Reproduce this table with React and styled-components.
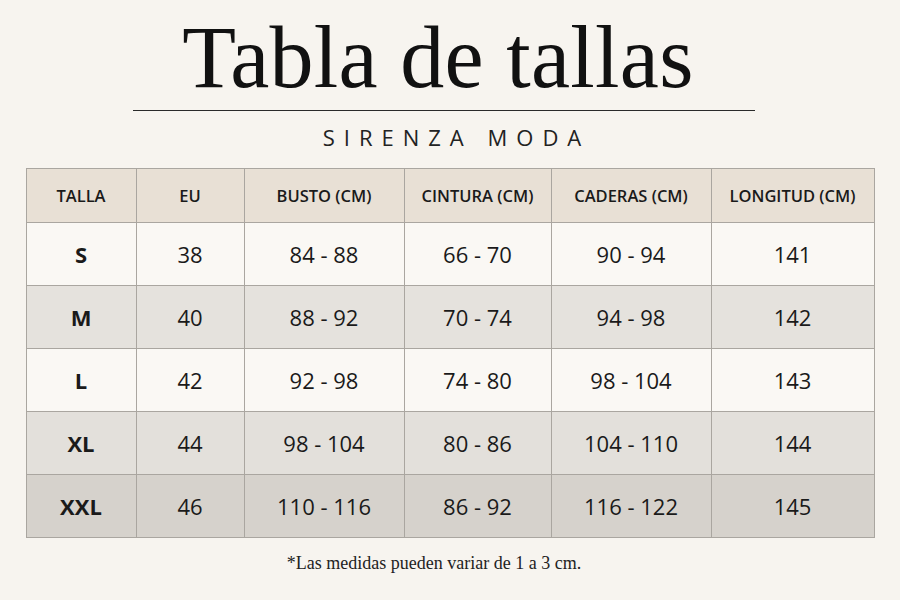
import React from "react"
import styled, { createGlobalStyle } from "styled-components"

const GlobalStyle = createGlobalStyle`
  html, body {
    margin: 0;
    padding: 0;
    background: #f7f4ef;
  }
`

const Page = styled.div`
  width: 900px;
  height: 600px;
  display: flex;
  flex-direction: column;
  align-items: center;
  background: #f7f4ef;
  overflow: hidden;
`

const Title = styled.h1`
  margin: 11px 24px 0 0;
  font-family: "Liberation Serif", "DejaVu Serif", serif;
  font-weight: 400;
  font-size: 88px;
  line-height: 94px;
  color: #111;
  letter-spacing: 0.3px;
`

const Rule = styled.hr`
  width: 622px;
  margin: 5px 12px 0 0;
  border: 0;
  border-top: 1.5px solid #2a2a2a;
`

const Brand = styled.div`
  margin-top: 12px;
  padding-left: 13px;
  font-family: "Open Sans", "Noto Sans", sans-serif;
  font-size: 22px;
  letter-spacing: 9px;
  color: #222;
  line-height: 28px;
`

const Table = styled.table`
  margin-top: 17px;
  border-collapse: collapse;
  table-layout: fixed;
  width: 848px;
  font-family: "Open Sans", "Noto Sans", sans-serif;
  color: #1a1a1a;
`

const Head = styled.th`
  height: 53px;
  padding: 0;
  background: #e8e0d5;
  border: 1px solid #aaa6a0;
  font-size: 16.5px;
  font-weight: 600;
  text-align: center;
`

const Row = styled.tr`
  background: ${p => p.$tone};
`

const Cell = styled.td`
  height: 62px;
  padding: 0;
  border: 1px solid #aaa6a0;
  text-align: center;
  font-size: 22px;
  font-weight: ${p => (p.$bold ? 700 : 400)};
`

const Note = styled.p`
  margin: 15px 32px 0 0;
  font-family: "Liberation Serif", "DejaVu Serif", serif;
  font-size: 18px;
  color: #222;
`

const widths = [110, 108, 160, 147, 160, 163]
const headers = ["TALLA", "EU", "BUSTO (CM)", "CINTURA (CM)", "CADERAS (CM)", "LONGITUD (CM)"]

const rows = [
  { tone: "#faf8f4", cells: ["S", "38", "84 - 88", "66 - 70", "90 - 94", "141"] },
  { tone: "#e5e2dd", cells: ["M", "40", "88 - 92", "70 - 74", "94 - 98", "142"] },
  { tone: "#faf8f4", cells: ["L", "42", "92 - 98", "74 - 80", "98 - 104", "143"] },
  { tone: "#e3e0db", cells: ["XL", "44", "98 - 104", "80 - 86", "104 - 110", "144"] },
  { tone: "#d6d2cc", cells: ["XXL", "46", "110 - 116", "86 - 92", "116 - 122", "145"] },
]

const App = () => (
  <Page>
    <GlobalStyle />
    <Title>Tabla de tallas</Title>
    <Rule />
    <Brand>SIRENZA MODA</Brand>
    <Table>
      <colgroup>
        {widths.map((w, i) => <col key={i} style={{ width: w }} />)}
      </colgroup>
      <thead>
        <tr>
          {headers.map(h => <Head key={h}>{h}</Head>)}
        </tr>
      </thead>
      <tbody>
        {rows.map(r => (
          <Row key={r.cells[0]} $tone={r.tone}>
            {r.cells.map((c, i) => (
              <Cell key={i} $bold={i === 0}>{c}</Cell>
            ))}
          </Row>
        ))}
      </tbody>
    </Table>
    <Note>*Las medidas pueden variar de 1 a 3 cm.</Note>
  </Page>
)

export default App
